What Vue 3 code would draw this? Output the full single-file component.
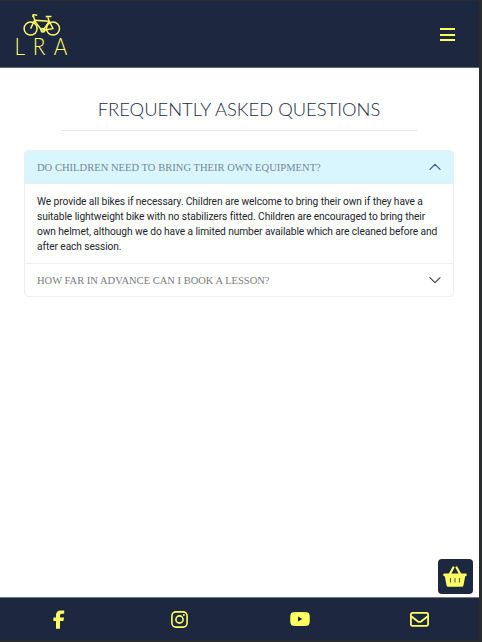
<script setup>
import { ref } from 'vue'

const open = ref(0)
const questions = [
  {
    title: 'Do children need to bring their own equipment?',
    lines: [
      'We provide all bikes if necessary. Children are welcome to bring their own if they have a',
      'suitable lightweight bike with no stabilizers fitted. Children are encouraged to bring their',
      'own helmet, although we do have a limited number available which are cleaned before and',
      'after each session.',
    ],
  },
  { title: 'How far in advance can I book a lesson?', lines: [] },
]
</script>

<template>
  <div class="frame">
    <div class="page">
      <header class="nav">
        <a class="brand" aria-label="LRA">
          <svg class="bike" width="38" height="24" viewBox="0 0 38 24" fill="none" stroke="currentColor">
            <g stroke-width="1.5">
              <circle cx="7.6" cy="15.6" r="6.5" />
              <circle cx="30" cy="15.6" r="6.5" />
            </g>
            <g stroke-width="1.4" stroke-linejoin="round">
              <path d="M7.6 15.6 11.6 7.3 26.3 8.2 20.5 17H18.5L11 7.3M24.8 4.5 26.3 8.2 30 15.6 20.5 17.2M24.8 4.5 27 10" />
              <path d="M11.8 7.5 10.4 2.9M9.9 4.3 10 1.6 14.2 2.2M22.7 3.5H28.5" />
              <circle cx="19.9" cy="17.2" r="1.8" />
            </g>
          </svg>
          <span class="letters"><span>L</span><span>R</span><span>A</span></span>
        </a>
        <button class="toggler" aria-label="Menu"><i></i><i></i><i></i></button>
      </header>

      <main>
        <h1><span>FREQUENTLY ASKED QUESTIONS</span></h1>
        <hr />
        <div class="accordion">
          <section v-for="(q, i) in questions" :key="i" class="item">
            <button class="head" :class="{ active: open === i }" @click="open = open === i ? -1 : i">
              <span>{{ q.title }}</span>
              <svg class="chev" width="12" height="12" viewBox="0 0 16 16">
                <path d="M1.2 4.7 8 11.4 14.8 4.7" fill="none" stroke="currentColor" stroke-width="1.4" stroke-linecap="round" stroke-linejoin="round" />
              </svg>
            </button>
            <div v-if="open === i" class="body">
              <template v-for="line in q.lines" :key="line">{{ line }}<br /></template>
            </div>
          </section>
        </div>
      </main>

      <div class="basket-row">
        <button class="basket" aria-label="Basket">
          <svg width="24" height="21" viewBox="0 0 24 21">
            <path d="M6.6 8.6 10.4 1.4M17.4 8.6 13.6 1.4" fill="none" stroke="currentColor" stroke-width="2.2" stroke-linecap="round" />
            <path fill="currentColor" fill-rule="evenodd" d="M1.2 7.6H22.8Q23.7 7.6 23.7 8.5V9.3Q23.7 10.2 22.8 10.2H22.2L20.5 19.2Q20.2 20.7 18.7 20.7H5.3Q3.8 20.7 3.5 19.2L1.8 10.2H1.2Q.3 10.2 .3 9.3V8.5Q.3 7.6 1.2 7.6ZM7.2 12V16.5H8V12ZM11.6 12V16.5H12.4V12ZM15.9 12V16.5H16.7V12Z" />
          </svg>
        </button>
      </div>

      <footer>
        <a aria-label="Facebook">
          <svg class="fb" width="12" height="19" viewBox="0 0 12 19"><path fill="currentColor" d="M3 18.8V11H.4V7.6H3V5.2Q3 .4 7.7 .4H11.2V3.7H8.8Q7 3.7 7 5.4V7.6H11L10.4 11H7V18.8Z" /></svg>
        </a>
        <a aria-label="Instagram">
          <svg width="17" height="17" viewBox="0 0 17 17" fill="none" stroke="currentColor">
            <rect x=".9" y=".9" width="15.2" height="15.2" rx="4" stroke-width="1.6" />
            <circle cx="8.5" cy="8.5" r="3.6" stroke-width="1.6" />
            <circle cx="12.9" cy="4.1" r="1" fill="currentColor" stroke="none" />
          </svg>
        </a>
        <a aria-label="YouTube">
          <svg width="20" height="14" viewBox="0 0 20 14"><path fill="currentColor" fill-rule="evenodd" d="M3 .3Q10-.3 17 .3Q19.3.5 19.6 3Q20 7 19.6 11Q19.3 13.5 17 13.7Q10 14.3 3 13.7Q.7 13.5.4 11Q0 7 .4 3Q.7.5 3 .3ZM8 4.5V9.5L12.4 7Z" /></svg>
        </a>
        <a aria-label="Email">
          <svg width="19" height="15" viewBox="0 0 19 15" fill="none" stroke="currentColor" stroke-width="1.8">
            <rect x=".9" y=".9" width="17.2" height="12.9" rx="1.5" />
            <path d="M1.2 4.2 7.6 9.2Q9.5 10.6 11.4 9.2L17.8 4.2" />
          </svg>
        </a>
      </footer>
    </div>
  </div>
</template>

<style>
body { margin: 0; background: #292c2c; }
</style>

<style scoped>
.frame { box-sizing: border-box; width: 482px; height: 642px; padding: 1px 3px 2px 0; background: #292c2c; }
.page { display: flex; flex-direction: column; height: 639px; background: #fff; font-family: Roboto, sans-serif; }
button { font: inherit; border: 0; padding: 0; background: none; }
svg { display: block; }
.nav { box-sizing: border-box; display: flex; justify-content: space-between; height: 67px; padding: 12px 17px 0 14px; background: #1d2840; border-bottom: 1px solid #60687a; color: #ffff62; }
.brand { width: 54px; }
.bike { margin-left: 9px; }
.letters { display: flex; justify-content: space-between; font: 300 23px/24px Lato, sans-serif; margin-top: -3px; }
.letters span { transform: scaleX(.9); }
.toggler { box-sizing: border-box; display: flex; flex-direction: column; align-items: center; justify-content: space-between; width: 30px; height: 13px; margin-top: 15px; color: inherit; }
.toggler i { width: 15px; height: 2px; background: currentColor; }
main { flex: 1; padding: 0 25px 0 24px; }
h1 { margin: 28px 0 0; text-align: center; font: 300 18.4px/26px Lato, sans-serif; color: #212b42; white-space: nowrap; }
hr { height: 1px; margin: 8px 37px 19px; border: 0; background: #e4e4e4; }
.accordion { border: 1px solid #eee; border-radius: 4px; overflow: hidden; }
.item + .item { border-top: 1px solid #eee; }
.head { display: flex; align-items: center; justify-content: space-between; width: 100%; height: 32px; padding: 0 12px; color: #34373d; text-transform: uppercase; font: 400 10.52px/16px "Liberation Serif", serif; white-space: nowrap; }
.head span { padding-top: 2px; color: #7b7b80; }
.active { background: #d9f6fe; color: #34507c; border-bottom: 1px solid #e4eff2; box-sizing: border-box; height: 33px; }
.active span { color: #748796; letter-spacing: .03px; }
.active .chev { transform: rotate(180deg); }
.body { padding: 10px 12px 9px; font-size: 10.2px; line-height: 15px; letter-spacing: -.08px; color: #212529; white-space: nowrap; }
.basket-row { display: flex; justify-content: flex-end; padding: 0 6px 3px 0; }
.basket { display: flex; align-items: center; justify-content: center; width: 35px; height: 35px; border-radius: 4px; background: #1d2840; color: #ffff62; }
.basket svg { margin-left: -1px; }
footer { box-sizing: border-box; display: grid; grid-template-columns: repeat(4, 120px); justify-content: center; align-items: center; height: 43px; border-top: 1px solid #737986; background: #1d2840; color: #ffff62; }
footer a { display: flex; justify-content: center; }
.fb { margin-right: 1px; }
</style>
